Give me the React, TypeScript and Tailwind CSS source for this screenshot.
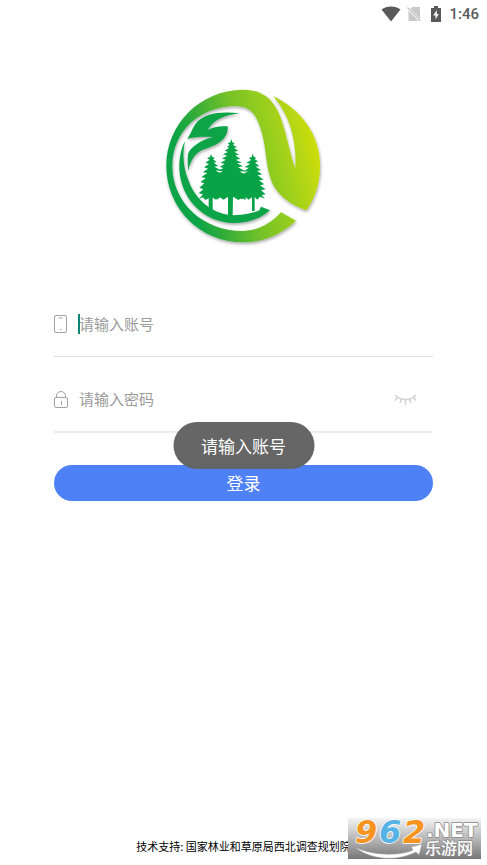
import React from "react";

const cjk = "font-['Noto_Sans_CJK_SC',sans-serif]";

function StatusBar() {
  return (
    <header className="flex h-7 items-center justify-end pr-2 text-[#5a5a5a]">
      <svg viewBox="0 0 20 16" className="h-4 w-5" aria-label="Wi-Fi">
        <path d="M10 15.500 .5 3.500C3 1.500 6.500.500 10 .500s7 1 9.500 3z" fill="currentColor" />
      </svg>
      <svg viewBox="0 0 14 16" className="ml-[6px] h-4 w-[14px]" aria-label="No SIM">
        <path d="M5.500 1H13v12L3.500 3z M1.500 4.500 11.500 15H1.500z" fill="#c9c9c9" />
        <path d="M.5 1.500 13.500 15" stroke="#c4c4c4" strokeWidth="1.200" fill="none" />
      </svg>
      <svg viewBox="0 0 10 16" className="ml-[10px] h-4 w-[10px]" aria-label="Charging">
        <path d="M3 0h4v2h3v14H0V2H3z" fill="currentColor" />
        <path d="M5.800 4 2.300 9.500h2.200V13.500L7.800 8H5.800z" fill="#fff" />
      </svg>
      <time className="ml-2 font-['Roboto',sans-serif] text-[15px] leading-5 font-medium">1:46</time>
    </header>
  );
}

function Logo() {
  return (
    <svg viewBox="3 0 528 516" className="h-[172px] w-44" role="img" aria-label="Logo">
      <defs>
        <linearGradient id="ring" gradientUnits="userSpaceOnUse" x1="85" y1="290" x2="490" y2="190">
          <stop offset="0" stopColor="#08a347" />
          <stop offset="0.200" stopColor="#36ae38" />
          <stop offset="0.450" stopColor="#76c228" />
          <stop offset="0.700" stopColor="#9bcf1d" />
          <stop offset="1" stopColor="#cfde0c" />
        </linearGradient>
        <filter id="soft" x="-10%" y="-10%" width="120%" height="120%">
          <feDropShadow dx="2" dy="5" stdDeviation="5" floodColor="#000" floodOpacity="0.350" />
        </filter>
      </defs>
      <g filter="url(#soft)">
        <path
          d="M423 422C377 465 323 487 263 487C136 487 34 385 34 258C34 132 136 30 263 29C315 29 352 51 374 105C393 153 402 211 421 266C425 188 409 113 355 49C438 88 494 164 495 252C496 305 483 350 454 391C405 374 366 343 350 305C329 250 336 195 313 135C300 98 283 79 240 78C130 80 53 158 52 255C50 365 143 453 263 453C306 453 346 432 378 397Z"
          fill="url(#ring)"
        />
        <path
          d="M90 183C81 225 85 266 101 303C123 364 177 404 237 406C267 405 293 400 313 391L318 380L345 391C314 418 276 430 232 429C143 426 76 354 73 265C73 232 78 207 90 183Z"
          fill="#08a347"
        />
        <path
          d="M253 100C195 92 150 102 128 124C112 142 109 160 97 177C120 170 150 170 174 171C140 180 108 198 99 222C97 240 99 258 100 273C106 240 122 215 150 207C190 195 220 175 218 139C195 137 172 142 158 150C175 120 206 106 253 100Z"
          fill="#08a347"
        />
      </g>
      <g fill="#08a347">
        <path d="M229 177L232 187L239 190L234 195L246 201L237 204L250 213L238 215L252 224L241 226L256 237L242 239L260 248L246 250L264 259L249 262L270 273L254 275L270 283L272 360L260 354L250 360L234 350L233 408H219V350L206 359L195 352L187 360L190 280L204 274L187 272L206 264L194 261L209 252L197 248L213 239L201 236L216 227L204 223L219 216L209 212L222 204L216 200L224 195L218 190L226 187Z" />
        <path d="M168 222L172 231L180 234L174 238L185 246L176 248L190 258L178 260L196 270L182 272L200 281L214 290L207 358L192 350L183 359L173 353V398L161 391V355L151 360L144 352L132 356L144 343L131 340L145 328L133 323L148 310L136 306L152 295L139 291L157 279L143 277L159 266L147 262L162 252L151 248L164 239L156 235L165 231Z" />
        <path d="M293 221L297 231L304 234L299 238L309 244L300 248L313 258L302 260L318 270L306 273L322 283L308 286L326 299L312 301L328 313L315 316L332 328L318 331L332 343L320 345L330 356L315 350L307 359L299 351V393H291V352L281 359L272 352L258 358L248 290L268 280L281 274L264 276L282 263L268 262L286 251L274 249L289 239L281 235L290 231Z" />
      </g>
    </svg>
  );
}

function PhoneIcon() {
  return (
    <svg viewBox="0 0 14 20" className="h-5 w-[14px]" fill="none" stroke="#a2a2a2" aria-hidden="true">
      <rect x="0.500" y="1.500" width="12" height="17" rx="1.500" />
      <path d="M4.500 4h4M6 15.500h1.500" />
    </svg>
  );
}

function LockIcon() {
  return (
    <svg viewBox="0 0 14 20" className="h-5 w-[14px]" fill="none" stroke="#a2a2a2" aria-hidden="true">
      <rect x="0.500" y="7.500" width="13" height="10" rx="1.500" />
      <path d="M2.500 7.500V6a4.500 4.500 0 0 1 9 0v1.500M7.500 11v4" />
    </svg>
  );
}

function Watermark() {
  return (
    <svg viewBox="0 0 133 41" className="absolute right-[6px] bottom-[6px] h-[41px] w-[133px] overflow-visible" role="img" aria-label="962.NET">
      <defs>
        <linearGradient id="plate" x1="0" y1="0" x2="0" y2="1">
          <stop offset="0" stopColor="#f4f4f4" />
          <stop offset="0.500" stopColor="#b8b8b8" />
          <stop offset="1" stopColor="#777" />
        </linearGradient>
      </defs>
      <rect width="133" height="41" fill="url(#plate)" />
      <path d="M7 29C25 38 52 38 65 32L63 29L74 26L71 37L68 34C49 44 22 42 7 29Z" fill="#fff" stroke="#999" strokeWidth="0.600" />
      <g
        className="font-['DejaVu_Sans',sans-serif] text-[32px] font-bold italic"
        stroke="#fff"
        strokeWidth="1.500"
        paintOrder="stroke"
        strokeLinejoin="round"
      >
        <text x="7" y="25" fill="#f79420">9</text>
        <text x="31" y="25" fill="#57b3e6">6</text>
        <text x="55" y="25" fill="#f79420">2</text>
      </g>
      <g fill="#fff" stroke="#8a8a8a" strokeWidth="1.500" paintOrder="stroke" strokeLinejoin="round">
        <text x="78" y="19" className="font-['DejaVu_Sans',sans-serif] text-[20px] font-bold">.NET</text>
        <text x="77" y="36" className="font-['Noto_Sans_CJK_SC',sans-serif] text-[16px] font-medium">乐游网</text>
      </g>
    </svg>
  );
}

const inputStyle =
  "h-8 w-full min-w-0 bg-transparent pb-[2px] text-[15px] text-[#333] outline-none placeholder:text-[#9b9b9b]";

export default function App() {
  return (
    <div className={`relative flex min-h-screen flex-col bg-white ${cjk}`}>
      <StatusBar />
      <main className="flex flex-col px-[54px]">
        <div className="mt-13 flex justify-center">
          <Logo />
        </div>
        <form className="mt-10 flex flex-col" onSubmit={(e) => e.preventDefault()}>
          <div className="flex h-[65px] items-center gap-[11px] border-b border-[#dedede]">
            <label htmlFor="account" aria-label="账号">
              <PhoneIcon />
            </label>
            <div className="relative flex-1">
              <input id="account" type="text" placeholder="请输入账号" className={inputStyle} />
              <span className="absolute top-1.5 left-[-1px] h-5 w-[2px] bg-[#0b8577]" />
            </div>
          </div>
          <div className="mt-[11px] flex h-[65px] items-center gap-[11px] border-b-2 border-[#ececec]">
            <label htmlFor="password" aria-label="密码">
              <LockIcon />
            </label>
            <input id="password" type="password" placeholder="请输入密码" className={inputStyle} />
            <button type="button" aria-label="显示密码" className="mr-4 shrink-0">
              <svg viewBox="0 0 24 12" className="h-3 w-6" fill="none" stroke="#d2d2d2" strokeWidth="1.500">
                <path d="M2 1C7 7 18 7 23 1M4.500 3.500 2 6.500M8.500 5.500 7 9M12.500 6v5M16.500 5.500 18 9M20.500 3.500l2.500 3" />
              </svg>
            </button>
          </div>
          <div className="relative mt-8 flex">
            <button type="submit" className="h-9 w-full rounded-full bg-[#4e81f5] text-[17px] text-white">
              登录
            </button>
            <div
              role="status"
              className="absolute -top-[43px] left-1/2 flex h-[47px] -translate-x-1/2 items-center rounded-full bg-[#636363]/98 px-7 text-[17px] whitespace-nowrap text-white"
            >
              请输入账号
            </div>
          </div>
        </form>
      </main>
      <footer className="mt-auto pb-[11px] text-center text-[11px] leading-4 text-black">
        技术支持: 国家林业和草原局西北调查规划院
      </footer>
      <Watermark />
    </div>
  );
}
